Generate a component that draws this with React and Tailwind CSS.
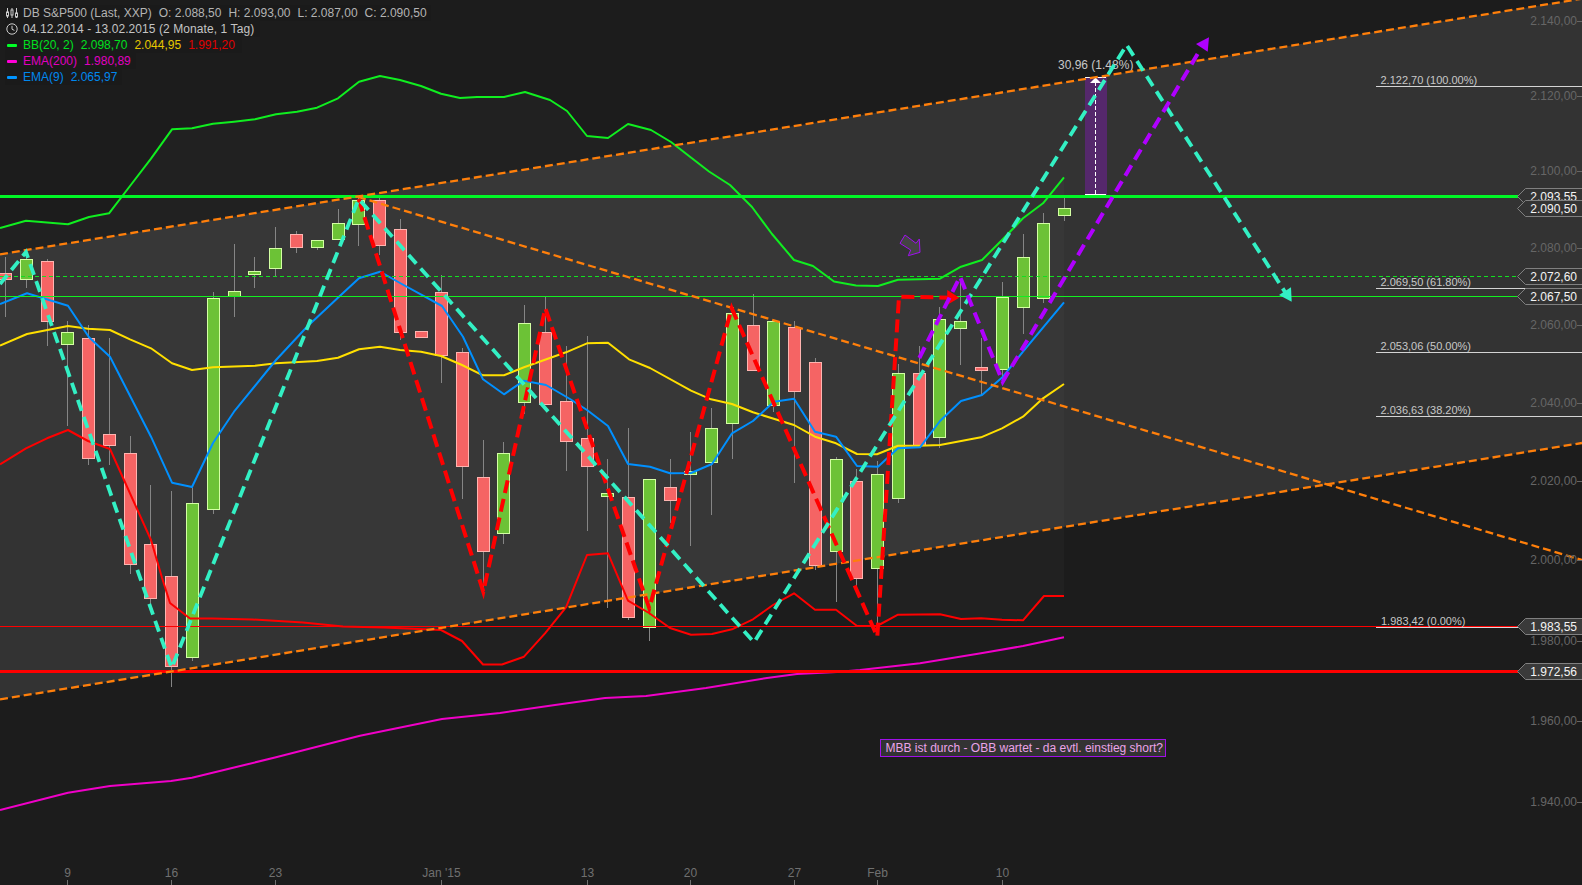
const cx = (i) => [5.5, 26.3, 47.3, 67.5, 88.7, 109.3, 130.3, 150.7, 171.3, 192.3, 213.3, 234.3, 254.7, 275.7, 296.7, 317.7, 338.7, 358.7, 379.7, 400.7, 421, 441.5, 462.3, 483.3, 503.3, 524.3, 545.3, 566.3, 587.3, 607.3, 628.3, 649.3, 670.3, 690.3, 711.3, 732.3, 753.3, 773.3, 794.3, 815.3, 836.3, 856.3, 877.3, 898.3, 919.3, 939.3, 960.3, 981.3, 1002.3, 1023.3, 1043.3, 1064.3][i];

// type, body top, body bottom, wick top, wick bottom
const candles = [
  ["r", 273, 279, 257, 317], ["g", 259, 279, 250, 288], ["r", 261, 321, 259, 346], ["g", 332, 344, 321, 426],
  ["r", 338, 458, 325, 465], ["r", 434, 445, 338, 465], ["r", 453, 564, 436, 574], ["r", 544, 598, 485, 605],
  ["r", 576, 666, 491, 687], ["g", 503, 657, 488, 661], ["g", 298, 509, 292, 514], ["g", 291, 296, 244, 317],
  ["g", 271, 274, 257, 288], ["g", 248, 268, 227, 276], ["r", 234, 247, 231, 253], ["g", 240, 247, 240, 250],
  ["g", 223, 239, 209, 239], ["g", 200, 224, 198, 246], ["r", 200, 245, 197, 255], ["r", 229, 332, 219, 340],
  ["r", 331, 337, 331, 337], ["r", 292, 355, 275, 383], ["r", 352, 466, 348, 499], ["r", 477, 551, 440, 592],
  ["g", 453, 533, 442, 544], ["g", 323, 402, 305, 414], ["r", 332, 404, 297, 405], ["r", 401, 441, 346, 471],
  ["r", 438, 466, 336, 531], ["g", 493, 496, 459, 608], ["r", 497, 617, 428, 620], ["g", 479, 627, 479, 641],
  ["r", 487, 500, 459, 523], ["g", 471, 474, 432, 546], ["g", 428, 462, 408, 515], ["g", 313, 423, 313, 459],
  ["r", 325, 370, 294, 371], ["g", 321, 405, 321, 412], ["r", 327, 391, 321, 483], ["r", 362, 565, 358, 570],
  ["g", 459, 551, 457, 602], ["r", 481, 578, 469, 590], ["g", 474, 568, 461, 627], ["g", 373, 498, 364, 503],
  ["r", 373, 445, 346, 445], ["g", 319, 437, 307, 448], ["g", 321, 328, 282, 365], ["r", 367, 370, 338, 395],
  ["g", 297, 369, 282, 380], ["g", 257, 307, 234, 334], ["g", 223, 298, 213, 303], ["g", 208, 215, 198, 221],
];

const bbTop = [[0, 228], [26, 220.7], [68, 224.3], [89, 217], [109, 213.3], [130, 186], [151, 158.7], [172, 129.3], [192, 128.3], [213, 123.7], [234, 121.7], [255, 119.3], [276, 114.3], [297, 111.7], [317, 107.7], [338, 98.3], [359, 81.7], [380, 76], [400, 80], [421, 86], [441, 93.7], [460, 98], [477, 97], [504, 97], [525, 92], [550, 100], [567, 111], [587, 136], [608, 138], [628, 124], [651, 130], [671, 142], [689, 156], [709, 171.5], [730, 185], [752, 207], [772, 234], [794, 260], [813, 266], [834, 281.5], [856, 285.5], [878, 286], [898, 279.7], [940, 278.7], [961, 266.7], [982, 260], [1002, 240], [1023, 218.3], [1043, 203.3], [1064, 177.3]];
const bbMid = [[0, 345.7], [27, 334], [68, 326], [88, 328.7], [110, 330], [130, 339.3], [151, 348.3], [172, 363.3], [192, 370], [213, 367.3], [255, 365.7], [276, 363.3], [317, 361], [338, 357.7], [359, 349.3], [380, 346.7], [400, 350], [421, 351.7], [441, 356], [462, 365], [483, 375.3], [504, 375.3], [524, 367.3], [566, 352.3], [587, 343.3], [608, 342.7], [629, 359.3], [650, 368], [691, 390.7], [711, 399.3], [732, 404], [753, 412.3], [794, 425], [815, 436.7], [836, 443.3], [857, 454], [877, 454.3], [898, 445.7], [919, 445.7], [940, 445], [981, 437.3], [1002, 428.3], [1023, 416.7], [1043, 398.3], [1064, 384]];
const bbLow = [[0, 464.3], [26, 448.3], [47, 438.3], [68, 430], [88, 441], [110, 449], [124, 480], [151, 540], [162, 577.7], [170, 603], [190, 618.5], [212, 618.5], [252, 619.5], [303, 622.5], [343, 626.5], [384, 627.5], [441, 630], [462, 641], [483, 664.5], [502, 664.5], [524, 656.7], [545, 633.3], [566, 607.3], [587, 555], [608, 553.3], [628, 600.7], [649, 613], [670, 628], [691, 634.7], [712, 634], [732, 629.3], [753, 619.3], [773, 605], [794, 593.3], [815, 609.7], [836, 609.7], [857, 626], [877, 626], [898, 614.7], [940, 614.3], [961, 619], [981, 618.3], [1002, 619.7], [1023, 620.3], [1044, 596], [1064, 596]];
const ema9 = [[0, 304], [27, 293.3], [68, 305.7], [89, 337.3], [110, 356.7], [151, 436.7], [172, 482.7], [192, 487], [213, 443], [234, 411.7], [276, 360], [307, 326.7], [339, 296.7], [359, 278.3], [380, 271.7], [400, 283], [442, 306], [463, 336.7], [483, 379.3], [504, 394.3], [524, 380.7], [546, 385], [570, 399], [587, 410], [608, 426], [628, 464], [650, 466.7], [670, 473.3], [691, 473], [712, 464], [732, 433.3], [753, 421], [774, 401.7], [794, 398.7], [815, 431.7], [836, 436.7], [857, 466], [878, 466.7], [898, 448.3], [920, 447.3], [940, 421], [961, 401], [982, 395], [1003, 376.7], [1023, 351.7], [1064, 302.3]];
const ema200 = [[0, 810], [68, 792.7], [110, 786], [171, 781], [192, 777.7], [276, 757.3], [360, 735.7], [442, 719], [500, 713], [555, 705], [605, 698], [646, 696], [706, 688], [767, 678], [797, 674], [837, 672], [860, 670], [920, 663.3], [981, 653.3], [1023, 646], [1064, 637.3]];

const yTicks = [["2.140,00", 20.7], ["2.120,00", 95.7], ["2.100,00", 170.7], ["2.080,00", 247.7], ["2.060,00", 325], ["2.040,00", 402.6], ["2.020,00", 481], ["2.000,00", 560], ["1.980,00", 640.7], ["1.960,00", 720.7], ["1.940,00", 802.3]];
const xTicks = [["9", 67.5], ["16", 171.5], ["23", 275.5], ["Jan '15", 441.5], ["13", 587.5], ["20", 690.5], ["27", 794.5], ["Feb", 877.5], ["10", 1002.5]];
const fibs = [["2.122,70 (100.00%)", 86.5], ["2.069,50 (61.80%)", 288.5], ["2.053,06 (50.00%)", 352.5], ["2.036,63 (38.20%)", 416.5]];
const tags = [["2.093,55", 188.5, "#333333"], ["2.072,60", 268.5, "#333333"], ["2.067,50", 288.5, "#333333"], ["2.090,50", 200.5, "#333333"], ["1.983,55", 618.5, "#3a3a3a"], ["1.972,56", 663.5, "#3a3a3a"]];

const pts = (list) => list.map((p) => p.join(",")).join(" ");

function Candle({ i }) {
  const [kind, top, bottom, wickTop, wickBottom] = candles[i];
  const x = Math.floor(cx(i));
  const fill = kind === "r" ? "#f56464" : "#6cc236";
  const edge = kind === "r" ? "#ffb4b0" : "#d4ffa4";
  return (
    <g>
      <line x1={x + 0.5} x2={x + 0.5} y1={wickTop} y2={wickBottom} stroke="#858585" />
      <rect x={x - 5.5} y={top + 0.5} width={12} height={bottom - top} fill={fill} stroke={edge} />
    </g>
  );
}

function Line({ data, color, width = 2 }) {
  return <polyline points={pts(data)} fill="none" stroke={color} strokeWidth={width} strokeLinejoin="round" />;
}

function Dashed({ data, color, width, dash }) {
  return <polyline points={pts(data)} fill="none" stroke={color} strokeWidth={width} strokeDasharray={dash} strokeLinejoin="miter" />;
}

function Chart() {
  return (
    <svg width="1582" height="885" viewBox="0 0 1582 885" className="block font-['Liberation_Sans',Arial,sans-serif]">
      {/* channel and bollinger area */}
      <polygon points="0,254.3 1582,-1.3 1582,443 0,699.3" fill="#333333" />
      <polygon points={pts([...bbTop, ...[...bbLow].reverse()])} fill="#ffffff" fillOpacity="0.025" />

      {candles.map((_, i) => <Candle key={i} i={i} />)}

      <Line data={bbLow} color="#ff0000" />
      <Line data={ema200} color="#f000c8" />
      <Line data={bbMid} color="#ffdf00" />
      <Line data={ema9} color="#0090ff" />
      <Line data={bbTop} color="#10ee20" />

      {/* levels */}
      <line x1="0" x2="1518" y1="196.5" y2="196.5" stroke="#00f726" strokeWidth="3" />
      <line x1="0" x2="1518" y1="276.5" y2="276.5" stroke="#12e020" strokeDasharray="4 3" />
      <line x1="0" x2="1518" y1="296.5" y2="296.5" stroke="#12f020" />
      <line x1="0" x2="1518" y1="626.5" y2="626.5" stroke="#ff0000" />
      <line x1="0" x2="1518" y1="671.5" y2="671.5" stroke="#ff0000" strokeWidth="3" />

      {/* fibonacci */}
      {fibs.map(([label, y]) => (
        <g key={label}>
          <line x1="1376" x2="1582" y1={y} y2={y} stroke="#d4d4d4" />
          <text x="1380.5" y={y - 2.5} fontSize="11" fill="#c8c8c8">{label}</text>
        </g>
      ))}
      <line x1="1376" x2="1518" y1="627.5" y2="627.5" stroke="#d8d8d8" />
      <text x="1381" y="625" fontSize="11" fill="#c8c8c8">1.983,42 (0.00%)</text>

      {/* measure tool */}
      <rect x="1085" y="77" width="22" height="118" fill="#55286c" />
      <line x1="1085" x2="1106" y1="77.5" y2="77.5" stroke="#ffffff" />
      <line x1="1085" x2="1106" y1="194.5" y2="194.5" stroke="#ffffff" />
      <line x1="1095.5" x2="1095.5" y1="82" y2="194" stroke="#ffffff" strokeDasharray="4 2" />
      <polygon points="1095.5,77.5 1090,83 1101,83" fill="#ffffff" />
      <text x="1058" y="69" fontSize="12" fill="#c8c8c8">30,96 (1.48%)</text>

      {/* trend lines */}
      <line x1="0" x2="1582" y1="254.3" y2="-1.3" stroke="#ff7f0a" strokeWidth="2.3" strokeDasharray="8 4" />
      <line x1="0" x2="1582" y1="699.3" y2="443" stroke="#ff7f0a" strokeWidth="2.3" strokeDasharray="8 4" />
      <line x1="358" x2="1582" y1="197" y2="560" stroke="#ff7f0a" strokeWidth="2.3" strokeDasharray="8 4" />

      <Dashed data={[[358.7, 199], [483.3, 591.7], [545.3, 308.3], [649.3, 608.3], [731.7, 308.3], [877.3, 636.7], [899, 296.7], [950, 297.7]]} color="#ff0000" width={4} dash="13 6" />
      <polygon points="959.3,297.7 947.3,290 947,305" fill="#ff0000" />

      <Dashed data={[[0, 284], [26, 252], [171.7, 668], [358.7, 199], [754, 642.3], [1126.7, 45], [1285, 292]]} color="#33f0c4" width={3.8} dash="11.5 6.5" />
      <polygon points="1291.7,301.7 1291,287.3 1279,295" fill="#33f0c4" />

      <Dashed data={[[919.3, 358], [960, 276.7], [1002.7, 381.7], [1200, 50]]} color="#b000ff" width={4} dash="12 6.5" />
      <polygon points="1209,37.3 1196,44 1207.7,51.7" fill="#b000ff" />

      {/* small marker */}
      <polygon points="905,235 900,243.3 910.7,250 908.3,255.7 920,252.3 919.3,239 916,243.3" fill="#444444" stroke="#a010f0" />

      {/* note */}
      <rect x="880.5" y="739.5" width="285" height="17" fill="#333333" stroke="#a010e8" />
      <text x="885.5" y="751.5" fontSize="12" fill="#eba4e8">MBB ist durch - OBB wartet - da evtl. einstieg short?</text>

      {/* y axis */}
      {yTicks.map(([label, y]) => (
        <g key={label}>
          <text x="1577" y={y + 4} fontSize="12" textAnchor="end" fill="#666666">{label}</text>
          <line x1="1577" x2="1582" y1={Math.round(y) + 0.5} y2={Math.round(y) + 0.5} stroke="#666666" />
        </g>
      ))}

      {/* price tags */}
      {tags.map(([label, y, fill]) => (
        <g key={label}>
          <polygon points={`1517.5,${y + 8} 1525.5,${y} 1583,${y} 1583,${y + 16} 1525.5,${y + 16}`} fill={fill} stroke="#808080" />
          <text x="1577" y={y + 12.5} fontSize="12" textAnchor="end" fill="#f4f4f4">{label}</text>
        </g>
      ))}

      {/* x axis */}
      {xTicks.map(([label, x]) => (
        <g key={label}>
          <text x={x} y="876.5" fontSize="12" textAnchor="middle" fill="#707070">{label}</text>
          <line x1={x} x2={x} y1="880" y2="885" stroke="#707070" />
        </g>
      ))}
    </svg>
  );
}

function Swatch({ className }) {
  return <span className={`h-[3px] w-[10px] shrink-0 rounded-[1px] mr-[6px] ml-[2px] ${className}`} />;
}

function Legend() {
  return (
    <div className="absolute left-[5px] top-[5px] flex flex-col text-[12px] leading-4 font-['Liberation_Sans',Arial,sans-serif] whitespace-nowrap">
      <div className="h-4 w-[426px] flex items-center bg-[#1a1a1a] text-[#b4b4b4]">
        <svg width="12" height="12" viewBox="0 0 12 12" className="shrink-0 mr-[5px] ml-[1px]" fill="none" stroke="#cccccc">
          <path d="M1.5 1v10M6 1v10M10.5 1v10" />
          <rect x="0.5" y="5" width="2" height="4" fill="#1a1a1a" />
          <rect x="5" y="3" width="2" height="5" fill="#1a1a1a" />
          <rect x="9.5" y="6" width="2" height="4" fill="#1a1a1a" />
        </svg>
        <span className="mr-[7px]">DB S&amp;P500 (Last, XXP)</span>
        <span className="mr-[7px]">O: 2.088,50</span>
        <span className="mr-[7px]">H: 2.093,00</span>
        <span className="mr-[7px]">L: 2.087,00</span>
        <span>C: 2.090,50</span>
      </div>
      <div className="h-4 w-[255px] flex items-center bg-[#1a1a1a] text-[#c4c4c4] tracking-[0.08px]">
        <svg width="12" height="12" viewBox="0 0 12 12" className="shrink-0 mr-[5px] ml-[1px]" fill="none" stroke="#cccccc">
          <circle cx="6" cy="6" r="5.2" />
          <path d="M6 2.8V6.2L8.4 7.4" />
        </svg>
        <span>04.12.2014 - 13.02.2015 (2 Monate, 1 Tag)</span>
      </div>
      <div className="h-4 w-[237px] flex items-center bg-[#1a1a1a]">
        <Swatch className="bg-[#00ff26]" />
        <span className="mr-[7px] text-[#00e020]">BB(20, 2)</span>
        <span className="mr-[7px] text-[#00e020]">2.098,70</span>
        <span className="mr-[7px] text-[#e6c800]">2.044,95</span>
        <span className="text-[#e00000]">1.991,20</span>
      </div>
      <div className="h-4 w-[131px] flex items-center bg-[#1a1a1a]">
        <Swatch className="bg-[#ff00d8]" />
        <span className="mr-[7px] text-[#e000c0]">EMA(200)</span>
        <span className="text-[#e000c0]">1.980,89</span>
      </div>
      <div className="h-4 w-[117px] flex items-center bg-[#1a1a1a]">
        <Swatch className="bg-[#0094ff]" />
        <span className="mr-[7px] text-[#0088ee]">EMA(9)</span>
        <span className="text-[#0088ee]">2.065,97</span>
      </div>
    </div>
  );
}

export default function App() {
  return (
    <div className="relative w-[1582px] h-[885px] overflow-hidden bg-[#1c1c1c]">
      <Chart />
      <Legend />
    </div>
  );
}
